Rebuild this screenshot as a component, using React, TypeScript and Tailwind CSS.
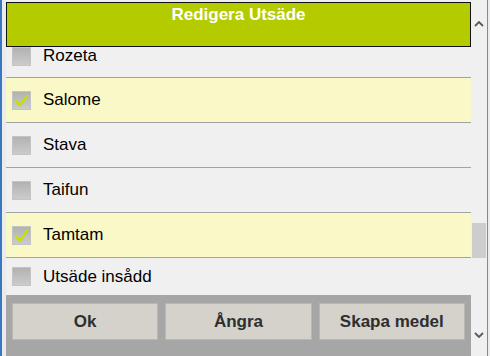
import React from "react";

interface SeedRow {
  name: string;
  checked: boolean;
}

const rows: SeedRow[] = [
  { name: "Rozeta", checked: false },
  { name: "Salome", checked: true },
  { name: "Stava", checked: false },
  { name: "Taifun", checked: false },
  { name: "Tamtam", checked: true },
  { name: "Utsäde insådd", checked: false },
];

function CheckBox({ checked }: { checked: boolean }) {
  return (
    <div className="w-[19px] h-[19px] shrink-0 border border-[#c4c4c4] bg-gradient-to-b from-[#b2b2b2] to-[#cbcbcb]">
      {checked && (
        <svg viewBox="0 0 19 19" className="w-full h-full">
          <polyline
            points="3,10 7.5,15 16,4"
            fill="none"
            stroke="#c8e000"
            strokeWidth="2.6"
            strokeLinecap="round"
            strokeLinejoin="round"
          />
        </svg>
      )}
    </div>
  );
}

export default function App() {
  return (
    <div
      className="flex w-[490px] h-[356px] overflow-hidden bg-[#f0f0f0]"
      style={{ fontFamily: '"Liberation Sans", Arial, sans-serif' }}
    >
      {/* window edge */}
      <div className="w-[2px] bg-[#3c76bd]" />
      <div className="w-[4px] bg-[#e9ecef]" />

      {/* main column */}
      <div className="w-[465px] flex flex-col">
        {/* header */}
        <div className="mt-[2px] h-[45px] shrink-0 border border-[#111] bg-[#b4cb00]">
          <div className="text-center text-white font-bold text-[17px] leading-[20px] pt-[2px]">
            Redigera Utsäde
          </div>
        </div>

        {/* list (scrolled: first and last rows partly hidden) */}
        <div className="flex-1 overflow-hidden">
          {rows.map((row, i) => (
            <div
              key={row.name}
              className={`flex items-center gap-[12px] pl-[6px] ${
                i === 0
                  ? "h-[31px] pb-[12px] border-b border-[#a3a3a3]"
                  : i === rows.length - 1
                  ? "h-[37px]"
                  : "h-[45px] border-b border-[#a3a3a3]"
              } ${row.checked ? "bg-[#f9f8c6]" : "bg-[#f0f0f0]"}`}
            >
              <CheckBox checked={row.checked} />
              <span className="text-[17px] leading-[18px] text-black">{row.name}</span>
            </div>
          ))}
        </div>

        {/* buttons */}
        <div className="h-[61px] shrink-0 bg-[#a6a6a6] flex gap-[7px] px-[6px] pt-[8px]">
          {["Ok", "Ångra", "Skapa medel"].map((label) => (
            <button
              key={label}
              className="flex-1 h-[37px] bg-[#d5d2cb] border border-[#bab7b1] text-[17px] font-bold text-[#2e2e2e]"
            >
              {label}
            </button>
          ))}
        </div>
      </div>

      {/* scrollbar */}
      <div className="w-[16px] flex flex-col bg-[#f0f0f0]">
        <div className="h-[48px] flex items-center justify-center">
          <svg viewBox="0 0 10 6" className="w-[10px] h-[6px]">
            <polyline points="1,5 5,1 9,5" fill="none" stroke="#5a5a5a" strokeWidth="1.8" />
          </svg>
        </div>
        <div className="flex-1">
          <div className="mt-[175px] ml-[1px] w-[14px] h-[35px] bg-[#cdcdcd]" />
        </div>
        <div className="h-[42px] flex items-center justify-center">
          <svg viewBox="0 0 10 6" className="w-[10px] h-[6px]">
            <polyline points="1,1 5,5 9,1" fill="none" stroke="#5a5a5a" strokeWidth="1.8" />
          </svg>
        </div>
      </div>
      <div className="w-[1px] bg-[#8a8a8a]" />
      <div className="w-[2px] bg-[#ececec]" />
    </div>
  );
}
